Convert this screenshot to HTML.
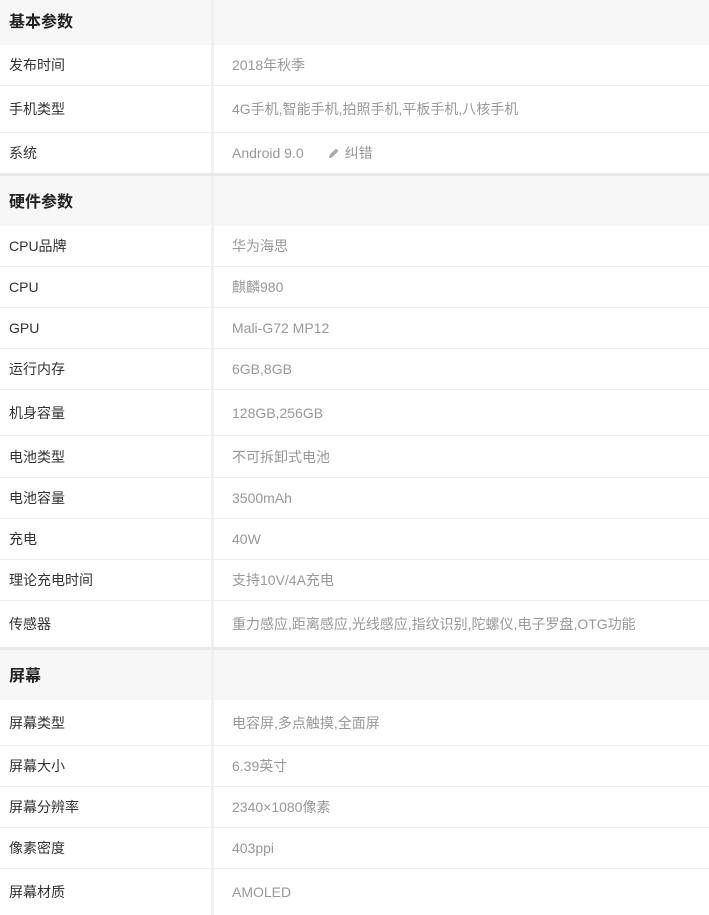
<!DOCTYPE html>
<html><head><meta charset="utf-8"><style>
*{margin:0;padding:0;box-sizing:border-box}
body{width:709px;height:904px;overflow:hidden;background:#fff;font-family:"Liberation Sans","Noto Sans CJK SC",sans-serif;font-size:14px;position:relative}
.r{position:absolute;left:0;width:709px;border-bottom:1px solid #eeeeee;display:flex;align-items:center}
.r .k{width:211px;padding-left:9px;color:#333}
.r .v{padding-left:18px;color:#999;border-left:3px solid #f0f0f0;height:100%;display:flex;align-items:center}
.h{background:#f7f7f7;border-bottom:none}
.h .k{font-weight:bold;font-size:16px;color:#222}
.h .v{border-left:3px solid #f0f0f0}
.t{position:absolute;left:0;width:709px;height:3px;background:#e8e8e8}
.pen{display:inline-block;margin-left:24px;color:#999}
</style></head><body>
<div class="r h" style="top:0;height:45px"><div class="k" style="margin-bottom:6px">基本参数</div><div class="v"></div></div>
<div class="r" style="top:45px;height:41px"><div class="k">发布时间</div><div class="v">2018年秋季</div></div>
<div class="r" style="top:86px;height:47px"><div class="k">手机类型</div><div class="v">4G手机,智能手机,拍照手机,平板手机,八核手机</div></div>
<div class="r" style="top:133px;height:40px;border-bottom:none"><div class="k">系统</div><div class="v">Android 9.0<span class="pen"><svg width="12" height="12" viewBox="0 0 12 12" style="vertical-align:-1px;margin-right:5px"><path d="M1 11 L1.5 8 L8 1.5 L10.5 4 L4 10.5 Z" fill="#aaa"/></svg>纠错</span></div></div>
<div class="t" style="top:173px"></div>
<div class="r h" style="top:176px;height:50px"><div class="k" style="margin-bottom:2px">硬件参数</div><div class="v"></div></div>
<div class="r" style="top:226px;height:41px"><div class="k">CPU品牌</div><div class="v">华为海思</div></div>
<div class="r" style="top:267px;height:41px"><div class="k">CPU</div><div class="v">麒麟980</div></div>
<div class="r" style="top:308px;height:41px"><div class="k">GPU</div><div class="v">Mali-G72 MP12</div></div>
<div class="r" style="top:349px;height:41px"><div class="k">运行内存</div><div class="v">6GB,8GB</div></div>
<div class="r" style="top:390px;height:46px"><div class="k">机身容量</div><div class="v">128GB,256GB</div></div>
<div class="r" style="top:436px;height:42px"><div class="k">电池类型</div><div class="v">不可拆卸式电池</div></div>
<div class="r" style="top:478px;height:41px"><div class="k">电池容量</div><div class="v">3500mAh</div></div>
<div class="r" style="top:519px;height:41px"><div class="k">充电</div><div class="v">40W</div></div>
<div class="r" style="top:560px;height:41px"><div class="k">理论充电时间</div><div class="v">支持10V/4A充电</div></div>
<div class="r" style="top:601px;height:46px;border-bottom:none"><div class="k">传感器</div><div class="v">重力感应,距离感应,光线感应,指纹识别,陀螺仪,电子罗盘,OTG功能</div></div>
<div class="t" style="top:647px"></div>
<div class="r h" style="top:650px;height:50px"><div class="k" style="margin-bottom:2px">屏幕</div><div class="v"></div></div>
<div class="r" style="top:700px;height:46px"><div class="k">屏幕类型</div><div class="v">电容屏,多点触摸,全面屏</div></div>
<div class="r" style="top:746px;height:41px"><div class="k">屏幕大小</div><div class="v">6.39英寸</div></div>
<div class="r" style="top:787px;height:41px"><div class="k">屏幕分辨率</div><div class="v">2340×1080像素</div></div>
<div class="r" style="top:828px;height:41px"><div class="k">像素密度</div><div class="v">403ppi</div></div>
<div class="r" style="top:869px;height:46px;border-bottom:none"><div class="k">屏幕材质</div><div class="v">AMOLED</div></div>
</body></html>
